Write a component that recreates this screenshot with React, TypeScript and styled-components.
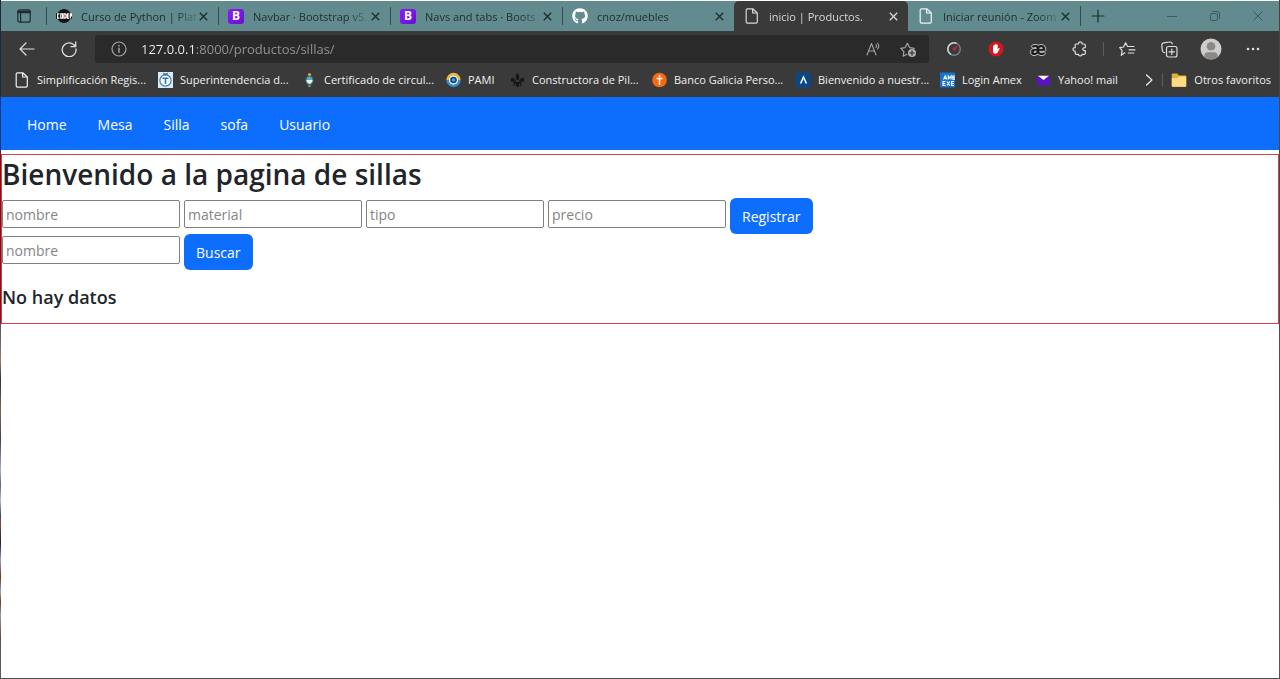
import React from "react";
import styled, { createGlobalStyle } from "styled-components";
import { FaGithub } from "react-icons/fa";

const GlobalStyle = createGlobalStyle`
  *, *::before, *::after { box-sizing: border-box; }
  body {
    margin: 0;
    background: #fff;
    color: #212529;
    font-family: "Open Sans", "Noto Sans", sans-serif;
    font-size: 14px;
  }
  button, input { font: inherit; }
  svg { display: block; flex: none; }
`;

const Window = styled.div`
  display: flex;
  flex-direction: column;
  min-height: 100vh;
  padding: 1px 1px 0 1px;
  border-bottom: 1px solid #4a4d52;
  background:
    linear-gradient(#1c2b3a 0 96px, #173a73 96px 150px, #7d1018 155px 320px, #4b5563 325px, #a07a68 360px, #2c3040 380px, #8a6048 410px, #3a4256 440px, #a9b5c6 470px, #5a6578 485px, #b4c0d0 500px, #414a5c 515px, #7d4a34 525px, #1c1f30 543px, #98a4b8 560px, #6d3414 577px, #9aa6ba 592px, #70391a 602px, #8e99ab 615px, #6a4a38 638px, #555b66 650px) left / 1px 100% no-repeat,
    linear-gradient(#444, #555) right / 1px 100% no-repeat,
    #fff;
`;

/* Tab strip */
const TabStrip = styled.header`
  display: flex;
  align-items: stretch;
  height: 30px;
  background: #628b90;
  color: #1f2b2e;
`;

const PlainButton = styled.button`
  display: flex;
  align-items: center;
  justify-content: center;
  flex: none;
  padding: 0;
  border: 0;
  background: none;
  color: inherit;
`;

const TabActions = styled(PlainButton)`
  width: 45px;
`;

const Tab = styled.div<{ $active?: boolean; $divided?: boolean }>`
  display: flex;
  align-items: center;
  position: relative;
  flex: 0 1 ${(p) => (p.$active ? 174 : 172)}px;
  min-width: 0;
  padding: 0 8px 0 10px;
  background: ${(p) => (p.$active ? "#3a3a3a" : "transparent")};
  color: ${(p) => (p.$active ? "#d8d8d8" : "inherit")};
  border-radius: ${(p) => (p.$active ? "5px 5px 0 0" : "0")};

  &::before {
    content: "";
    display: ${(p) => (p.$divided ? "block" : "none")};
    position: absolute;
    left: 0;
    top: 6px;
    bottom: 6px;
    width: 1px;
    background: #38494c;
  }
`;

const TabTitle = styled.button`
  display: flex;
  align-items: center;
  gap: 9px;
  flex: 1;
  min-width: 0;
  padding: 0;
  border: 0;
  background: none;
  color: inherit;
  font-size: 11px;
  text-align: left;
`;

const TabLabel = styled.span`
  flex: 1;
  overflow: hidden;
  white-space: nowrap;
  mask-image: linear-gradient(to right, #000 82%, rgba(0, 0, 0, 0.2));
`;

const TabClose = styled(PlainButton)`
  width: 14px;
  height: 18px;
`;

const NewTab = styled(PlainButton)`
  width: 34px;
  border-left: 1px solid transparent;
  border-image: linear-gradient(transparent 20%, #38494c 20% 80%, transparent 80%) 1;
`;

const WindowControls = styled.div`
  display: flex;
  margin-left: auto;
  color: #40595d;
`;

const ControlButton = styled(PlainButton)`
  width: 43px;
`;

/* Toolbar */
const Toolbar = styled.div`
  display: flex;
  align-items: center;
  height: 36px;
  padding: 0 5px;
  background: #3a3a3a;
  color: #dedede;
`;

const ToolButton = styled(PlainButton)`
  width: 42px;
  height: 28px;
`;

const AddressBar = styled.div`
  display: flex;
  align-items: center;
  flex: 1;
  min-width: 0;
  height: 28px;
  margin: 0 4px 0 5px;
  padding: 0 4px 0 16px;
  border-radius: 3px;
  background: #2a2a2a;
  color: #a3a3a3;
`;

const AddressInput = styled.input`
  flex: 1;
  min-width: 0;
  margin-left: 14px;
  padding: 0;
  border: 0;
  outline: 0;
  font-size: 13px;
  color: transparent;
  background: linear-gradient(to right, #f5f5f5 54px, #969696 54px);
  background-clip: text;
  -webkit-background-clip: text;
`;

const AddressButton = styled(PlainButton)`
  width: 34px;
  height: 28px;
`;

const Ligature = styled.span`
  color: #1c1c1c;
  font-size: 17px;
  font-weight: 700;
  line-height: 20px;
  text-shadow: 1px 0 #bbb, -1px 0 #bbb, 0 1px #bbb, 0 -1px #bbb;
`;

const ToolDivider = styled.span`
  flex: none;
  width: 1px;
  height: 14px;
  margin: 0 2px;
  background: #5c5c5c;
`;

/* Favourites bar */
const Favorites = styled.nav`
  display: flex;
  align-items: center;
  height: 30px;
  padding: 0 8px 5px 13px;
  background: #3a3a3a;
  color: #f0f0f0;
`;

const Favorite = styled.a<{ $width?: number }>`
  display: flex;
  align-items: center;
  gap: 7px;
  flex: 0 0 ${(p) => (p.$width ? `${p.$width}px` : "auto")};
  color: inherit;
  font-size: 11px;
  text-decoration: none;
  white-space: nowrap;
`;

const FavoritesMore = styled.div`
  display: flex;
  align-items: center;
  gap: 6px;
  margin-left: auto;
`;

/* Site */
const SiteNav = styled.nav`
  display: flex;
  align-items: center;
  gap: 31px;
  height: 53px;
  padding: 2px 26px 0;
  background: #0d6efd;
`;

const SiteLink = styled.a`
  color: #fff;
  text-decoration: none;
`;

const Content = styled.main`
  margin-top: 4px;
  padding-bottom: 13px;
  border: 1px solid #d0404a;
`;

const Title = styled.h1`
  margin: 0;
  padding-bottom: 5px;
  font-size: 28px;
  line-height: 38px;
  font-weight: 600;
`;

const Row = styled.form`
  display: flex;
  flex-wrap: wrap;
  align-items: center;
  gap: 4px;
`;

const Field = styled.input`
  width: 178px;
  height: 28px;
  margin-bottom: 4px;
  padding: 0 3px;
  border: 1px solid #808080;
  border-radius: 2px;
  background: #fff;
  color: #212529;
  &::placeholder { color: #858585; opacity: 1; }
`;

const Primary = styled.button`
  height: 36px;
  padding: 0 12px;
  border: 0;
  border-radius: 6px;
  background: #0d6efd;
  color: #fff;
`;

const Empty = styled.h2`
  margin: 15px 0 0;
  padding-bottom: 1px;
  font-size: 18px;
  line-height: 24px;
  font-weight: 600;
`;

const PageIcon = () => (
  <svg width="16" height="16" viewBox="0 0 16 16" fill="none" stroke="currentColor" strokeWidth="1.2" strokeLinejoin="round">
    <path d="M3.500.8h5.300l4.500 4.200v8.800c0 .8-.5 1.400-1.300 1.400H3.500c-.8 0-1.300-.6-1.300-1.400V2.200c0-.8.5-1.400 1.300-1.400zM8.600.8v4.200h4.400" />
  </svg>
);

const CloseIcon = () => (
  <svg width="9" height="9" viewBox="0 0 9 9" stroke="currentColor" strokeWidth="1.3">
    <path d="M.8.8l7.400 7.400M8.200.8L.8 8.200" />
  </svg>
);

const BootstrapMark = styled.span`
  display: flex;
  align-items: center;
  justify-content: center;
  flex: none;
  width: 16px;
  height: 15px;
  border-radius: 3px;
  background: linear-gradient(135deg, #8a1cf5, #6610d8);
  color: #fff;
  font-size: 12px;
  font-weight: 700;
  line-height: 1;
`;

const LightIcon = styled.span`
  color: #eef4f4;
`;

const CoderIcon = () => (
  <svg width="16" height="16" viewBox="0 0 16 16">
    <circle cx="8" cy="8" r="7" fill="#111" />
    <rect x="0" y="5" width="16" height="6" rx="1" fill="#111" />
    <g fill="none" stroke="#fff" strokeWidth="1.2">
      <path d="M3.400 5.800H1.600v4.400h1.800M4.800 5.800h1.800v4.400H4.800zM8 5.800h1.300l.7.8v2.800l-.7.800H8zM13 5.800h-1.600v4.400H13M11.400 8H13M14.300 10.400V5.800h1.200V8h-1.200" />
    </g>
  </svg>
);

const tabs = [
  { title: "Curso de Python | Plat", icon: <CoderIcon />, divided: true },
  { title: "Navbar · Bootstrap v5.", icon: <BootstrapMark>B</BootstrapMark>, divided: true },
  { title: "Navs and tabs · Boots", icon: <BootstrapMark>B</BootstrapMark>, divided: true },
  { title: "cnoz/muebles", icon: <FaGithub size={16} color="#fff" />, divided: true },
  { title: "inicio | Productos.", icon: <PageIcon />, active: true },
  { title: "Iniciar reunión - Zoom", icon: <LightIcon><PageIcon /></LightIcon> },
];

const FavShield = () => (
  <svg width="15" height="16" viewBox="0 0 15 16">
    <rect width="15" height="16" fill="#dcebf5" />
    <circle cx="7.500" cy="8.500" r="5.600" fill="#fff" stroke="#3b7fb6" strokeWidth="1.200" />
    <path d="M4.500 6.200h6M7.500 6v6M5.200 1.500l2.300 1.300 2.300-1.300" fill="none" stroke="#2c74ad" strokeWidth="1.600" />
  </svg>
);

const FavCrest = () => (
  <svg width="15" height="16" viewBox="0 0 15 16">
    <ellipse cx="7.500" cy="8.300" rx="3.600" ry="4.400" fill="#59a9c6" stroke="#35624f" strokeWidth="1.300" />
    <path d="M4.600 8h5.800v1.800L7.500 12.200 4.600 9.800z" fill="#eef2ee" />
    <circle cx="7.500" cy="2.500" r="1.600" fill="#d7a83c" />
    <path d="M5.500 14l2-1 2 1-2 1.300z" fill="#5aa5cf" />
  </svg>
);

const FavPami = () => (
  <svg width="15" height="16" viewBox="0 0 15 16" fill="none">
    <circle cx="7.500" cy="8" r="5" fill="#e9eef2" />
    <path d="M1.500 8a6 6 0 0 1 12 0" stroke="#e9b93c" strokeWidth="2.400" />
    <path d="M1.500 8a6 6 0 0 0 12 0" stroke="#2f8fd0" strokeWidth="2.400" />
    <circle cx="7.500" cy="8" r="3.300" fill="#14466e" />
    <circle cx="7.500" cy="8" r="1.700" fill="#43a3dc" />
  </svg>
);

const FavLys = () => (
  <svg width="15" height="16" viewBox="0 0 15 16" fill="#161616">
    <path d="M7.500 1c2 1.800 2.300 3.800 1 7h-2c-1.300-3.200-1-5.200 1-7zM6 9.500C4.500 5.500 1.500 4.500.8 7.300c-.5 2.400 1.700 3.500 2.700 2 1 .2 1.300 1 1 1.700zM9 9.500c1.500-4 4.500-5 5.200-2.200.5 2.400-1.700 3.500-2.700 2-1 .2-1.300 1-1 1.700z" />
    <path d="M3.500 10h8v1.600h-8zM6.300 11h2.400l.6 2.500L7.500 15.500l-1.800-2zM4.500 11.500l1 .3-1.500 2.400-1-.8zM10.500 11.500l-1 .3 1.500 2.400 1-.8z" />
  </svg>
);

const FavGalicia = () => (
  <svg width="15" height="16" viewBox="0 0 15 16">
    <circle cx="7.500" cy="8" r="7.300" fill="#f36a10" />
    <path d="M4.500 6.500h6M7.500 5.500v7.500" stroke="#fff" strokeWidth="1.400" />
    <circle cx="7.500" cy="4" r="1.100" fill="#fff" />
  </svg>
);

const FavArrow = () => (
  <svg width="15" height="16" viewBox="0 0 15 16">
    <rect y=".5" width="15" height="15" rx="1" fill="#0d4685" />
    <path d="M4.600 11.500l2.900-6.500 2.900 6.500" fill="none" stroke="#fff" strokeWidth="1.500" />
  </svg>
);

const FavAmex = () => (
  <svg width="15" height="16" viewBox="0 0 15 16">
    <rect y=".5" width="15" height="15" fill="#1674cc" />
    <path d="M3.500 7.500l1.800-3.700 1.600 3.700M4.300 6.500h2M8.300 7.500V4l1.400 2 1.400-2v3.500M15 4h-2.200v3.300H15M12.800 5.700H15M5.500 9.500H3v4h2.500M3 11.500h2.300M6.900 9.500l3 4M9.900 9.500l-3 4M14 9.500h-2.400v4H14M11.600 11.500h2.200" fill="none" stroke="#fff" strokeWidth="1.100" />
  </svg>
);

const FavYahoo = () => (
  <svg width="15" height="16" viewBox="0 0 15 16">
    <path d="M1 4h13v8.500c0 .6-.4 1-1 1H2c-.6 0-1-.4-1-1z" fill="#5b11c4" />
    <path d="M2 3.700h11L7.500 8z" fill="#fff" />
  </svg>
);

const FolderIcon = () => (
  <svg width="16" height="16" viewBox="0 0 16 16">
    <path d="M.8 2.500c0-.6.400-1 1-1h4.400l1.800 2h6.200c.6 0 1 .4 1 1v9.200c0 .6-.4 1-1 1H1.800c-.6 0-1-.4-1-1z" fill="#e5ad3d" />
    <path d="M.8 6h5.400l1.600-1.500h7.400v9.200c0 .6-.4 1-1 1H1.800c-.6 0-1-.4-1-1z" fill="#ffdc82" />
  </svg>
);

const favorites = [
  { label: "Simplificación Regis...", icon: <PageIcon />, width: 144 },
  { label: "Superintendencia d...", icon: <FavShield />, width: 144 },
  { label: "Certificado de circul...", icon: <FavCrest />, width: 144 },
  { label: "PAMI", icon: <FavPami />, width: 64 },
  { label: "Constructora de Pil...", icon: <FavLys />, width: 142 },
  { label: "Banco Galicia Perso...", icon: <FavGalicia />, width: 144 },
  { label: "Bienvenido a nuestr...", icon: <FavArrow />, width: 144 },
  { label: "Login Amex", icon: <FavAmex />, width: 96 },
  { label: "Yahoo! mail", icon: <FavYahoo />, width: 96 },
];

const links = ["Home", "Mesa", "Silla", "sofa", "Usuario"];
const fields = ["nombre", "material", "tipo", "precio"];

const line = { fill: "none", stroke: "currentColor", strokeWidth: 1.2, strokeLinecap: "round", strokeLinejoin: "round" } as const;

export default function App() {
  return (
    <Window>
      <GlobalStyle />
      <TabStrip>
        <TabActions aria-label="Menú de pestañas">
          <svg width="14" height="14" viewBox="0 0 14 14" {...line}>
            <rect x=".8" y=".8" width="12.400" height="12.400" rx="2" />
            <path d="M1 2.400h12M1 3.600h12M3.600 4v9" />
          </svg>
        </TabActions>
        {tabs.map((t) => (
          <Tab key={t.title} $active={t.active} $divided={t.divided}>
            <TabTitle>
              {t.icon}
              <TabLabel>{t.title}</TabLabel>
            </TabTitle>
            <TabClose aria-label="Cerrar pestaña"><CloseIcon /></TabClose>
          </Tab>
        ))}
        <NewTab aria-label="Nueva pestaña">
          <svg width="14" height="14" viewBox="0 0 14 14" {...line}><path d="M7 1v12M1 7h12" /></svg>
        </NewTab>
        <WindowControls>
          <ControlButton aria-label="Minimizar">
            <svg width="10" height="10" viewBox="0 0 10 10" {...line} strokeWidth="1"><path d="M0 5.500h10" /></svg>
          </ControlButton>
          <ControlButton aria-label="Restaurar">
            <svg width="10" height="10" viewBox="0 0 10 10" {...line} strokeWidth="1">
              <rect x=".5" y="2.500" width="7" height="7" rx="1.500" />
              <path d="M2.500.5H7A2.500 2.500 0 0 1 9.500 3v4.500" />
            </svg>
          </ControlButton>
          <ControlButton aria-label="Cerrar">
            <svg width="10" height="10" viewBox="0 0 10 10" {...line} strokeWidth="1"><path d="M.5.5l9 9M9.500.5l-9 9" /></svg>
          </ControlButton>
        </WindowControls>
      </TabStrip>

      <Toolbar>
        <ToolButton aria-label="Atrás">
          <svg width="16" height="16" viewBox="0 0 16 16" {...line}><path d="M15 8H1M7 2L1 8l6 6" /></svg>
        </ToolButton>
        <ToolButton aria-label="Actualizar">
          <svg width="16" height="16" viewBox="0 0 16 16" {...line} strokeWidth="1.300"><path d="M14.200 5.500A6.900 6.900 0 1 0 15 8M14.700 1v4.700H10" /></svg>
        </ToolButton>
        <AddressBar>
          <svg width="16" height="16" viewBox="0 0 16 16" {...line}>
            <circle cx="8" cy="8" r="7" />
            <path d="M8 7.300v4M8 4.600v.3" strokeWidth="1.500" />
          </svg>
          <AddressInput aria-label="Dirección" defaultValue="127.0.0.1:8000/productos/sillas/" />
          <AddressButton aria-label="Leer en voz alta">
            <svg width="16" height="16" viewBox="0 0 16 16" {...line}>
              <path d="M1 14L5.500 2.500 10 14M2.600 10h5.800M10 3.500c.8.900.8 2 0 3M11.500 2c1.500 1.700 1.500 4.200 0 6" strokeWidth="1.100" />
            </svg>
          </AddressButton>
          <AddressButton aria-label="Agregar a favoritos">
            <svg width="17" height="17" viewBox="0 0 17 17" {...line}>
              <path d="M7 13.200l-3.800 2 .7-4.600L.8 7.300l4.400-.7 2.200-4.300 2.100 4.300 4.700.7" />
              <circle cx="12" cy="12" r="4" fill="#b0b0b0" stroke="none" />
              <path d="M12 9.800v4.400M9.800 12h4.400" stroke="#2a2a2a" />
            </svg>
          </AddressButton>
        </AddressBar>
        <ToolButton aria-label="Extensión de seguridad">
          <svg width="16" height="16" viewBox="0 0 16 16" fill="none">
            <circle cx="8" cy="8" r="6.300" stroke="#77818c" strokeWidth="1.400" />
            <path d="M5 13.500A6.300 6.300 0 0 1 10.500 2.200" stroke="#c8d0da" strokeWidth="1.600" />
            <path d="M11.800 4.500L6.500 7.500l2 2.500z" fill="#b3343c" stroke="#8d2f38" strokeWidth="1.200" />
          </svg>
        </ToolButton>
        <ToolButton aria-label="Bloqueador de anuncios">
          <svg width="16" height="16" viewBox="0 0 16 16">
            <path d="M5 .8h6L15.200 5v6L11 15.200H5L.8 11V5z" fill="#d5141c" />
            <path d="M5 8V5.200c0-.8 1.100-.8 1.100 0V4c0-.8 1.200-.8 1.200 0v-.6c0-.8 1.200-.8 1.200 0V4c0-.8 1.200-.8 1.200 0v4.200l.9-1c.6-.6 1.400-.1 1 .6l-1.800 3.500c-.5.900-1.200 1.400-2.300 1.400C5.800 12.700 5 11.500 5 10z" fill="#fff" />
          </svg>
        </ToolButton>
        <ToolButton aria-label="Extensión">
          <Ligature>æ</Ligature>
        </ToolButton>
        <ToolButton aria-label="Extensiones">
          <svg width="16" height="16" viewBox="0 0 16 16" {...line}>
            <path d="M4.300 3h2.200C6 .2 10.500.2 10 3h2.200c.7 0 1.100.4 1.100 1.100v2.500c-3.300-.4-3.300 3.500 0 3v2.700c0 .7-.4 1.100-1.100 1.100H10c.3 2-3.800 2-3.500 0H4.300c-.7 0-1.100-.4-1.100-1.100V10C.3 10.400.3 6.200 3.200 6.600V4.100C3.200 3.400 3.600 3 4.300 3z" />
          </svg>
        </ToolButton>
        <ToolDivider />
        <ToolButton aria-label="Favoritos">
          <svg width="17" height="16" viewBox="0 0 17 16" {...line}>
            <path d="M5.800 11.800l-3.500 2.500.8-4.700L.8 6.600l3.800-.6 2-4.300 2 3.800H15M10 8.800h6M9.300 12h5.500" />
          </svg>
        </ToolButton>
        <ToolButton aria-label="Colecciones">
          <svg width="17" height="17" viewBox="0 0 17 17" {...line}>
            <rect x="5.500" y="5.500" width="10.500" height="10.500" rx="2" />
            <path d="M10.800 8v5.500M8 10.800h5.500M3.500 11.700C2 11.500 1.500 10.800 1.300 9.500L.8 4C.7 2.700 1.300 2 2.500 1.800L9 1c1.300-.1 2 .4 2.300 1.800" />
          </svg>
        </ToolButton>
        <ToolButton aria-label="Perfil">
          <svg width="22" height="22" viewBox="0 0 22 22">
            <circle cx="11" cy="11" r="10.500" fill="#cfcdcb" />
            <circle cx="11" cy="8.300" r="4.300" fill="#8b8886" />
            <path d="M4.300 19v-1.500c0-2 1.500-3.300 3.200-3.300h7c1.700 0 3.200 1.300 3.200 3.300V19A10.500 10.500 0 0 1 4.300 19z" fill="#8b8886" />
          </svg>
        </ToolButton>
        <ToolButton aria-label="Configuración y más">
          <svg width="14" height="4" viewBox="0 0 14 4" fill="currentColor">
            <circle cx="2" cy="2" r="1.300" /><circle cx="7" cy="2" r="1.300" /><circle cx="12" cy="2" r="1.300" />
          </svg>
        </ToolButton>
      </Toolbar>

      <Favorites>
        {favorites.map((f) => (
          <Favorite key={f.label} href="#" $width={f.width}>
            {f.icon}
            {f.label}
          </Favorite>
        ))}
        <FavoritesMore>
          <PlainButton aria-label="Más favoritos">
            <svg width="9" height="12" viewBox="0 0 9 12" {...line}><path d="M1.500 1l5.500 5-5.500 5" /></svg>
          </PlainButton>
          <ToolDivider />
          <Favorite href="#">
            <FolderIcon />
            Otros favoritos
          </Favorite>
        </FavoritesMore>
      </Favorites>

      <SiteNav>
        {links.map((l) => (
          <SiteLink key={l} href="#">{l}</SiteLink>
        ))}
      </SiteNav>

      <Content>
        <Title>Bienvenido a la pagina de sillas</Title>
        <Row onSubmit={(e) => e.preventDefault()}>
          {fields.map((f) => (
            <Field key={f} type="text" placeholder={f} aria-label={f} />
          ))}
          <Primary type="submit">Registrar</Primary>
        </Row>
        <Row onSubmit={(e) => e.preventDefault()}>
          <Field type="text" placeholder="nombre" aria-label="buscar por nombre" />
          <Primary type="submit">Buscar</Primary>
        </Row>
        <Empty>No hay datos</Empty>
      </Content>
    </Window>
  );
}
